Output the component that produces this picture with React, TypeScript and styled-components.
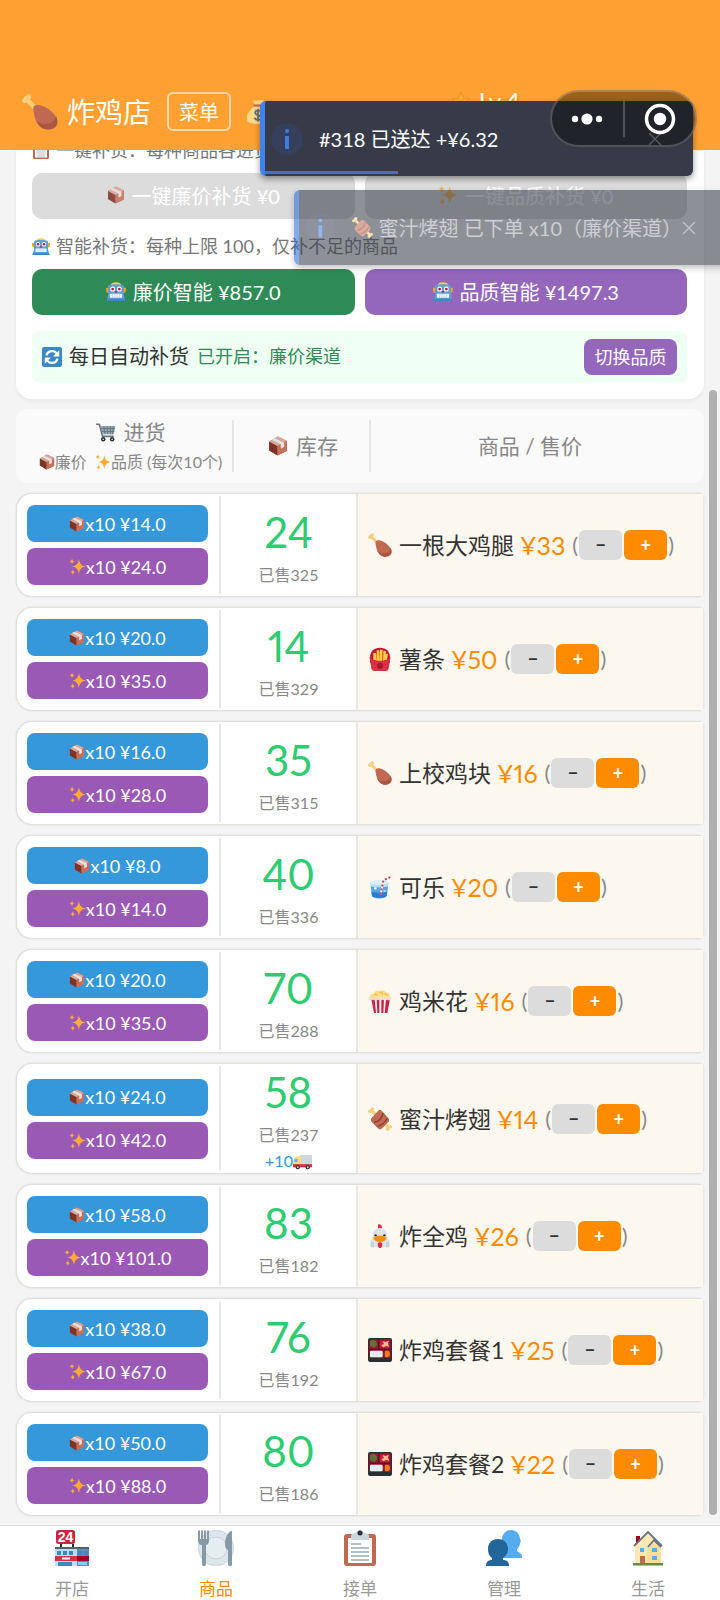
import React from "react";
import styled, { createGlobalStyle } from "styled-components";

const GlobalStyle = createGlobalStyle`
  *, *::before, *::after { box-sizing: border-box; }
  body {
    margin: 0;
    background: #f4f4f4;
    color: #333;
    font-family: Lato, "Noto Sans CJK SC", sans-serif;
    font-size: 18px;
  }
  button { font-family: inherit; border: 0; padding: 0; cursor: pointer; }
`;

/* ---------- Icons ---------- */

const icons: Record<string, React.ReactNode> = {
  drumstick: (
    <>
      <path d="M4 4.500 14 15" stroke="#f3cf7e" strokeWidth="4.500" strokeLinecap="round" />
      <circle cx="2.800" cy="6.500" r="2.600" fill="#f3cf7e" />
      <circle cx="6.500" cy="2.800" r="2.600" fill="#f3cf7e" />
      <path d="M12 12c3-2 7-1 11 1 6 3 12 9 12.500 14.500.5 5-3.500 8-9 8C19 35.500 14 29 12.500 22c-.7-4-2-8-.5-10z" fill="#bf6952" />
      <path d="M34 22c3 6 .5 13-8 13.500-6 0-10-4-12-9 6 5 17 6 20-4.500z" fill="#aa5742" />
    </>
  ),
  box: (
    <>
      <path d="M2 10 18 1l16 8v18L17 35 2 26z" fill="#b5654f" />
      <path d="M2 10 17 18v17L2 26z" fill="#7f3326" />
      <path d="M17 18 34 9v18l-17 8z" fill="#c5705a" />
      <path d="M2 10 18 1l16 8-17 9z" fill="#d6a79b" />
      <path d="m7 7 5-3 17 8v8l-6 3v-8z" fill="#e6e0de" />
    </>
  ),
  sparkles: (
    <g fill="#ffac33">
      <path d="M21 2c2 11 5 14 15 16-10 2-13 5-15 16-2-11-5-14-14-16 9-2 12-5 14-16z" />
      <path d="M6.500 1c1 4 2 5 5.500 6-3.500 1-4.500 2-5.500 6C5.500 9 4.500 8 1 7c3.500-1 4.500-2 5.500-6zM8 24c1 4 2 5 5 6-3 1-4 2-5 5.500C7 32 6 31 3 30c3-1 4-2 5-6z" />
    </g>
  ),
  robot: (
    <>
      <path d="M9 6C11 1 25 1 27 6l2 3H7z" fill="#ffcc4d" />
      <path d="M0 12h5v9H2c-2-1-2-7-2-9zM31 12h5c0 2 0 8-2 9h-3z" fill="#f4a41c" />
      <path d="M4 9c1-4 27-4 28 0v17l3 9H1l3-9z" fill="#5c9fdb" />
      <path d="M2 32h32l1 4H1z" fill="#3b88c3" />
      <rect x="8" y="10" width="8" height="9" rx="3" fill="#fff" />
      <rect x="20" y="10" width="8" height="9" rx="3" fill="#fff" />
      <circle cx="12" cy="14.500" r="2.500" fill="#be1931" /><circle cx="24" cy="14.500" r="2.500" fill="#be1931" />
      <rect x="16.500" y="18" width="3" height="3" fill="#be1931" />
      <rect x="7" y="23" width="22" height="7" rx="1" fill="#f5f8fa" />
      <path d="M12 23v7m4-7v7m4-7v7m4-7v7" stroke="#aab8c2" />
    </>
  ),
  refresh: (
    <>
      <rect width="36" height="36" rx="4" fill="#3b88c3" />
      <path d="M8 15c2-6 7-8.500 12-7.500 3 .6 5 2 7 4.500M28 21c-2 6-7 8.500-12 7.500-3-.6-5-2-7-4.500" fill="none" stroke="#fff" strokeWidth="4" />
      <path d="M31 6v11H20zM5 30V19h11z" fill="#fff" />
    </>
  ),
  cart: (
    <>
      <path d="M0 4h6l6 22h20" fill="none" stroke="#66757f" strokeWidth="3" strokeLinejoin="round" />
      <path d="M7 7h28l-3 15H12z" fill="#9aaab5" />
      <path d="M8 12h26M10 17h23M14 7l2 15M20 7l1 15M26 7v15M31 7l-1 15" stroke="#5d6e7a" strokeWidth="1.500" />
      <circle cx="13" cy="31" r="4" fill="#292f33" /><circle cx="29" cy="31" r="4" fill="#292f33" />
      <circle cx="13" cy="31" r="1.500" fill="#ccd6dd" /><circle cx="29" cy="31" r="1.500" fill="#ccd6dd" />
    </>
  ),
  fries: (
    <>
      <path d="M3 16C3 6 9 1 18 1s15 5 15 15v8H3z" fill="#bb1a34" />
      <path d="M8 9h4l1 15H8zM13 5h4v18h-4zM18 4h4l-1 18h-4zM23 6h4l-1 17h-4zM27 10h3l-2 12h-3z" fill="#ffcc4d" />
      <path d="m12 10 1 9m4-13v12m6-11-1 12" stroke="#f4900c" />
      <path d="M2 14c3 9 29 9 32 0l-3 18c-.4 3-2 4-5 4H10c-3 0-4.600-1-5-4z" fill="#dd2e44" />
      <circle cx="18" cy="28" r="4.500" fill="#a81730" />
    </>
  ),
  cup: (
    <>
      <path d="M3 11h28l-3 20c-1 6-21 6-22 0z" fill="#bbddf5" />
      <path d="M4 17c6 2 20 2 26 0l-2 14c-1 5-21 5-22 0z" fill="#55a5e6" />
      <path d="M5 25c7 2 16 2 24 0l-1 6c-2 4-20 4-22 0z" fill="#2b7bd0" />
      <ellipse cx="17" cy="11" rx="14" ry="3.500" fill="#dff0fb" />
      <path d="m19 29 4-21 11-5" fill="none" stroke="#f5f8fa" strokeWidth="3" />
      <path d="m19 29 4-21 11-5" fill="none" stroke="#c1435b" strokeWidth="3" strokeDasharray="3 3" />
      <circle cx="11" cy="20" r="2" fill="#e1f2ff" /><circle cx="25" cy="24" r="2" fill="#a5d4fa" />
    </>
  ),
  popcorn: (
    <>
      <path d="M3 13c-1-5 4-7 6-6 1-5 7-6 9-3 3-4 8-2 9 2 4-1 7 2 6 7z" fill="#ffdc7d" />
      <path d="M9 9c2-2 4-1 5 1m3-5c2-1 5 0 5 3m3 0c2-1 4 0 4 3" stroke="#f0a63c" strokeWidth="1.500" fill="none" />
      <path d="M3 15h30l-4 21H7z" fill="#f5f0f2" />
      <path d="m5 15 4 21h3l-2-21zM13 15l1 21h3V15zM20 15v21h3l1-21zM27 15l-2 21h4l4-21z" fill="#c32648" />
      <path d="M1 12q4-2 7 0 4-2 7 0 4-2 7 0 4-2 7 0 4-1 6 0v4q-3 2-6 0-4 2-7 0-4 2-7 0-4 2-7 0-4 1-7 0z" fill="#f1dfc3" />
    </>
  ),
  meat: (
    <>
      <path d="M5 5 31 31" stroke="#f3cf7e" strokeWidth="4.500" strokeLinecap="round" />
      <circle cx="2.800" cy="6.500" r="2.600" fill="#f3cf7e" /><circle cx="6.500" cy="2.800" r="2.600" fill="#f3cf7e" />
      <circle cx="33.200" cy="29.500" r="2.600" fill="#f3cf7e" /><circle cx="29.500" cy="33.200" r="2.600" fill="#f3cf7e" />
      <path d="M5 17 16 5c2-1 4 0 6 2l8 9c2 2 2 4 1 6L20 33c-2 1-4 0-6-2l-8-8c-2-2-2-4-1-6z" fill="#bf6952" />
      <path d="M9 23c7-1 12-7 14-14M15 29c6-2 11-6 14-12" stroke="#8c3a2b" strokeWidth="1.800" fill="none" />
    </>
  ),
  chicken: (
    <>
      <path d="M15 1c2-2 7 0 6 7h-6z" fill="#dd2e44" />
      <path d="M7 20C7 10 12 6 18 6s11 4 11 14l3 5v10H4V25z" fill="#dbe4ea" />
      <path d="M4 27h5v8H4zM27 27h5v8h-5z" fill="#c6d1d9" />
      <circle cx="11.500" cy="17" r="1.800" fill="#292f33" /><circle cx="24.500" cy="17" r="1.800" fill="#292f33" />
      <path d="M8 21c4-5 16-5 20 0-2 5-6 6-10 6S10 26 8 21z" fill="#f4900c" />
      <path d="M15 28c1-1 5-1 6 0 1 4 0 8-3 8s-4-4-3-8z" fill="#dd2e44" />
    </>
  ),
  bento: (
    <>
      <rect width="36" height="36" rx="3" fill="#292f33" />
      <rect x="2" y="2" width="32" height="28" rx="1" fill="#a0132d" />
      <path d="M3 5c5-4 10-1 11 5l-4 5-7-3z" fill="#5c7238" />
      <path d="M18 4h14v11H18z" fill="#c81e3d" />
      <path d="m20 11 4-2-2-4 5 1 4-2-1 5 2 4-5-1-4 2z" fill="#f6bd93" />
      <rect x="3" y="19" width="19" height="10" rx="2" fill="#e8eef2" />
      <circle cx="28" cy="24" r="5" fill="#ef781f" />
      <path d="M16 2v15M2 17h32M24 17v13" stroke="#55162a" strokeWidth="2" />
      <path d="M7 23h2m3 2h2m3-2h2" stroke="#bec9d0" />
    </>
  ),
  truck: (
    <>
      <path d="M13 6h23v19H13z" fill="#ccd6dd" />
      <path d="M3 12c1-3 3-4 5-4h7v16H0v-5z" fill="#ffdc7d" />
      <path d="M3 13h6v6H2z" fill="#70b5e8" />
      <path d="M0 23h36v6H0z" fill="#dd2e44" />
      <circle cx="9" cy="29" r="4" fill="#292f33" /><circle cx="28" cy="29" r="4" fill="#292f33" />
      <circle cx="9" cy="29" r="1.800" fill="#ccd6dd" /><circle cx="28" cy="29" r="1.800" fill="#ccd6dd" />
    </>
  ),
  store: (
    <>
      <path d="M7 14v5m12-5v5" stroke="#292f33" strokeWidth="2" />
      <path d="M1 17h34v19H1z" fill="#bbddf5" />
      <path d="M23 17h12v19H23z" fill="#5c8db9" />
      <path d="M1 17h22v2H1zM23 17h12v2H23z" fill="#555f6b" />
      <path d="M3 21h4v4H3zM9 21h4v4H9zM15 21h4v4h-4zM24 21h4v4h-4zM30 21h4v4h-4z" fill="#3b88c3" />
      <path d="M1 26h22v5H1z" fill="#dd2e44" /><path d="M23 26h12v5H23z" fill="#a0041e" />
      <path d="M8 27.500h8v2H8z" fill="#fff" />
      <path d="M4 32h14v4H4z" fill="#3b88c3" /><path d="M24 32h9v3h-9z" fill="#88c9f9" />
      <rect x="2" width="19" height="14" rx="2.500" fill="#cf2540" />
      <text x="11.500" y="12" textAnchor="middle" fontFamily="Liberation Sans" fontWeight="700" fontSize="14" fill="#fff">24</text>
    </>
  ),
  plate: (
    <>
      <circle cx="18" cy="18" r="18" fill="#ccd6dd" />
      <circle cx="18" cy="18" r="17" fill="#dde6eb" />
      <circle cx="18" cy="18" r="11" fill="#e4edf2" stroke="#c5d1d9" />
      <path d="M0 1c0-1 2-1 2 0v8h1V1c0-1 2-1 2 0v8h1V1c0-1 2-1 2 0v8h1V1c0-1 2-1 2 0v10c0 3-2 4-3 4v19c0 3-4 3-4 0V15c-3 0-4-2-4-4zM34 1v33c0 3-4 3-4 0V20c-6-2-2-19 4-19z" fill="#8899a6" />
    </>
  ),
  clipboard: (
    <>
      <rect x="2" y="4" width="32" height="32" rx="3" fill="#c1694f" />
      <path d="M6 8h24v25H6z" fill="#fff" />
      <path d="M9 14h10M9 18h18M9 22h18M9 26h18M9 30h18" stroke="#99aab5" strokeWidth="1.500" />
      <path d="M9 10V6c0-2 3-3 5-3 1-4 7-4 8 0 2 0 5 1 5 3v4z" fill="#ccd6dd" />
      <circle cx="18" cy="3" r="2.500" fill="#292f33" />
    </>
  ),
  people: (
    <>
      <path d="M25 0c5 0 9 4 9 9 1 2 1 3 0 4 0 2-1 4-3 6v2l3 2c2 1 2 3 2 5H16c0-3 1-5 5-6v-3c-3-2-5-5-5-9C16 4 20 0 25 0z" fill="#55acee" />
      <path d="M12 9c6 0 10 4 10 10 0 4-2 7-5 9v2c4 0 6 2 6 6H0c0-4 2-6 6-6v-2c-3-2-4-5-4-9C2 13 6 9 12 9z" fill="#226699" />
    </>
  ),
  house: (
    <>
      <path d="M6 6h4v9H6z" fill="#a0041e" />
      <path d="M5 15 18 3l13 13v17H5z" fill="#ffe8b6" />
      <path d="M17 16l6-6 8 7v16H17z" fill="#ffd983" opacity=".6" />
      <path d="M4 16 18 2l14 14M18 17l6-7 7 7" fill="none" stroke="#66757f" strokeWidth="1.800" />
      <path d="M10 18h4v4h-4zM22 18h5v4h-5zM22 26h5v4h-5z" fill="#55acee" />
      <path d="M10 26h5v7h-5z" fill="#c1694f" /><path d="M3 33h30v2.500H3z" fill="#5c913b" />
    </>
  ),
  money: (
    <>
      <path d="M11 2c5 2 10-2 15 0l-3 7h-9zM13 10h11c7 5 11 13 9 20-2 6-28 6-30 0-2-7 3-15 10-20z" fill="#fdd888" />
      <path d="M12 9h13" stroke="#bf6952" strokeWidth="3" />
      <path d="M23 18c-2-3-9-3-9 1s9 3 9 7-8 4-10 0M18 14v17" stroke="#67757f" strokeWidth="2.500" fill="none" />
    </>
  ),
  star: <path d="m18 2 4.500 11H34l-9 8 3.500 12L18 26 7.500 33 11 21l-9-8h11.500z" fill="#ffac33" stroke="#d98b1c" />,
};

const IconSvg = styled.svg<{ $size: number; $dim?: boolean }>`
  display: inline-block;
  flex: none;
  width: ${(p) => p.$size}px;
  height: ${(p) => p.$size}px;
  opacity: ${(p) => (p.$dim ? 0.85 : 1)};
`;

function Icon({ name, size, dim }: { name: string; size: number; dim?: boolean }) {
  return (
    <IconSvg $size={size} $dim={dim} viewBox="0 0 36 36" aria-hidden="true">
      {icons[name]}
    </IconSvg>
  );
}

/* ---------- Page shell ---------- */

const Shell = styled.div`
  position: relative;
  display: flex;
  flex-direction: column;
  height: 100vh;
  overflow: hidden;
`;

const Header = styled.header`
  position: relative;
  z-index: 1;
  flex: none;
  display: flex;
  align-items: center;
  height: 150px;
  padding: 73px 200px 0 22px;
  background: #ffa033;
  color: #fff;
`;

const ShopTitle = styled.h1`
  margin: 0 16px 0 9px;
  font-size: 28px;
  line-height: 40px;
  font-weight: 400;
`;

const MenuButton = styled.button`
  width: 64px;
  height: 39px;
  margin-right: 14px;
  border: 2px solid rgba(255, 255, 255, 0.6);
  border-radius: 6px;
  background: transparent;
  color: #fff;
  font-size: 20px;
  line-height: 32px;
`;

const Level = styled.span`
  display: flex;
  align-items: center;
  gap: 8px;
  align-self: flex-start;
  margin: 16px 0 0 auto;
  font-size: 24px;
  line-height: 24px;
`;

const Main = styled.main`
  flex: 1;
  min-height: 0;
  padding: 0 16px;
  overflow-y: auto;
  scrollbar-width: none;
`;

/* ---------- Restock panel ---------- */

const RestockCard = styled.section`
  margin: -43px 0 10px;
  padding: 16px 17px 16px 16px;
  border-radius: 16px;
  background: #fff;
  box-shadow: 0 2px 4px rgba(0, 0, 0, 0.05);
`;

const Note = styled.p`
  display: flex;
  align-items: center;
  gap: 6px;
  margin: 15px 0 11px;
  color: #777;
  font-size: 18px;
  line-height: 24px;
`;

const ButtonPair = styled.div`
  display: grid;
  grid-template-columns: 1fr 1fr;
  gap: 10px;
`;

const tones = { off: "#dcdcdc", green: "#2e8b57", purple: "#9467bd" };

const BulkButton = styled.button<{ $tone: keyof typeof tones }>`
  display: flex;
  align-items: center;
  justify-content: center;
  gap: 7px;
  height: 46px;
  padding-bottom: 2px;
  border-radius: 10px;
  background: ${(p) => tones[p.$tone]};
  color: #fff;
  font-size: 20px;
`;

const AutoRow = styled.div`
  display: flex;
  align-items: center;
  margin-top: 16px;
  padding: 8px 10px;
  border-radius: 8px;
  background: #effff4;
  line-height: 24px;
`;

const AutoTitle = styled.span`
  margin: 0 8px 2px 7px;
  font-size: 20px;
`;

const AutoStatus = styled.span`
  margin-bottom: 2px;
  color: #2e8b57;
  font-size: 18px;
`;

const SwitchButton = styled.button`
  width: 93px;
  height: 36px;
  margin-left: auto;
  border-radius: 8px;
  background: #9467bd;
  color: #fff;
  font-size: 18px;
  line-height: 34px;
`;

/* ---------- Product table ---------- */

const Table = styled.table`
  display: block;
`;

const TableHead = styled.thead`
  display: block;
`;

const TableBody = styled.tbody`
  display: flex;
  flex-direction: column;
  gap: 10px;
  padding: 10px 0;
`;

const HeadRow = styled.tr`
  display: grid;
  grid-template-columns: 208px 137px 1fr;
  padding: 11px 10px;
  border-radius: 12px;
  background: #fafafa;
`;

const HeadCell = styled.th<{ $last?: boolean }>`
  display: flex;
  flex-direction: column;
  align-items: center;
  justify-content: center;
  gap: 8px;
  padding: ${(p) => (p.$last ? "0 5px 0 0" : "0 0 0 3px")};
  border-right: ${(p) => (p.$last ? "0" : "2px solid #e5e5e5")};
  color: #888;
  font-weight: 400;
`;

const HeadLabel = styled.span`
  display: flex;
  align-items: center;
  gap: 8px;
  font-size: 21px;
  line-height: 24px;
`;

const HeadHint = styled.span`
  display: flex;
  align-items: center;
  font-size: 16px;
  line-height: 20px;
  white-space: pre;
`;

const ProductRow = styled.tr`
  display: grid;
  grid-template-columns: 204px 137px 1fr;
  min-height: 104px;
  border: 1px solid #e3dfda;
  border-right-color: #eeebe6;
  border-radius: 16px 6px 6px 16px;
  background: #fff;
  box-shadow: 0 0 2px rgba(0, 0, 0, 0.12);
`;

const BuyCell = styled.td`
  display: flex;
  flex-direction: column;
  justify-content: center;
  gap: 6px;
  margin: 2px 0;
  padding: 0 11px 0 10px;
  border-right: 2px solid #e8e8e8;
`;

const BuyButton = styled.button<{ $premium?: boolean }>`
  display: flex;
  align-items: center;
  justify-content: center;
  height: 37px;
  border-radius: 8px;
  background: ${(p) => (p.$premium ? "#9b59b6" : "#3498db")};
  color: #fff;
  font-size: 18px;
`;

const StockCell = styled.td`
  display: flex;
  flex-direction: column;
  align-items: center;
  justify-content: center;
  gap: 4px;
  padding: 0 0 1px;
  border-right: 2px solid #e8e8e8;
`;

const StockCount = styled.strong`
  color: #2ecc71;
  font-size: 42px;
  line-height: 56px;
  font-weight: 400;
  font-variant-numeric: proportional-nums;
`;

const SoldCount = styled.span`
  color: #888;
  font-size: 16px;
  line-height: 22px;
`;

const Incoming = styled.span`
  display: flex;
  align-items: center;
  color: #3498db;
  font-size: 16px;
  line-height: 22px;
`;

const ProductCell = styled.td`
  display: flex;
  align-items: center;
  padding: 0 10px;
  background: #fdf8ef;
  color: #888;
  font-size: 22px;
  line-height: 30px;
  white-space: nowrap;
`;

const ProductName = styled.span`
  margin: 0 6px 0 7px;
  color: #333;
  font-size: 23px;
`;

const Price = styled.span`
  margin-right: 7px;
  color: #ff8c00;
  font-size: 25px;
  font-variant-numeric: proportional-nums;
`;

const StepButton = styled.button<{ $plus?: boolean }>`
  width: 43px;
  height: 30px;
  margin-left: ${(p) => (p.$plus ? 2 : 1)}px;
  margin-right: ${(p) => (p.$plus ? 1 : 0)}px;
  border-radius: 6px;
  background: ${(p) => (p.$plus ? "#ff8c00" : "#dcdcdc")};
  color: ${(p) => (p.$plus ? "#fff" : "#333")};
  font-size: 18px;
  line-height: 30px;
  font-weight: 700;
`;

const ScrollThumb = styled.div`
  position: absolute;
  top: 390px;
  right: 3px;
  bottom: 85px;
  width: 8px;
  border-radius: 4px;
  background: #afafaf;
`;

/* ---------- Tab bar ---------- */

const TabBar = styled.nav`
  flex: none;
  display: grid;
  grid-template-columns: repeat(5, 1fr);
  padding: 4px 0 0;
  border-top: 1px solid #ddd;
  background: #fff;
`;

const Tab = styled.a<{ $active?: boolean }>`
  display: flex;
  flex-direction: column;
  align-items: center;
  gap: 12px;
  color: ${(p) => (p.$active ? "#ff8c00" : "#999")};
  font-size: 17px;
  line-height: 22px;
  text-decoration: none;
`;

/* ---------- Floating layers ---------- */

const ToastStack = styled.div`
  position: absolute;
  z-index: 2;
  top: 101px;
  right: 27px;
  width: 433px;
  display: flex;
  flex-direction: column;
  gap: 14px;
`;

const ToastBox = styled.div<{ $leaving?: boolean }>`
  position: relative;
  display: flex;
  align-items: center;
  height: 75px;
  margin-left: ${(p) => (p.$leaving ? 34 : 0)}px;
  margin-right: ${(p) => (p.$leaving ? -34 : 0)}px;
  padding: 0 31px 0 6px;
  border-left: 5px solid ${(p) => (p.$leaving ? "#2468dc" : "#3f82f0")};
  border-radius: 6px;
  background: #373b49;
  box-shadow: 0 3px 6px rgba(0, 0, 0, 0.4);
  color: ${(p) => (p.$leaving ? "#a6a8ae" : "#fff")};
  font-size: 20px;
  white-space: pre;
  opacity: ${(p) => (p.$leaving ? 0.56 : 1)};
`;

const ToastText = styled.span`
  display: flex;
  align-items: center;
  gap: 6px;
  margin-left: 16px;
`;

const ToastClose = styled.button`
  display: flex;
  margin-left: auto;
  background: transparent;
  color: #8e919a;
`;

const ToastProgress = styled.div`
  position: absolute;
  left: 0;
  bottom: 2px;
  width: 133px;
  height: 3px;
  background: #4470c4;
`;

const Capsule = styled.div`
  position: absolute;
  z-index: 3;
  top: 90px;
  right: 23px;
  display: flex;
  align-items: center;
  width: 147px;
  height: 57px;
  border: 2px solid rgba(255, 255, 255, 0.22);
  border-radius: 29px;
  background: rgba(0, 0, 0, 0.4);
`;

const CapsuleButton = styled.button`
  flex: 1;
  display: flex;
  justify-content: center;
  background: transparent;
`;

const CapsuleDivider = styled.span`
  width: 2px;
  height: 36px;
  background: rgba(255, 255, 255, 0.22);
`;

/* ---------- Data ---------- */

interface Product {
  icon: string;
  name: string;
  price: number;
  cheap: string;
  premium: string;
  stock: number;
  sold: number;
  incoming?: number;
}

const products: Product[] = [
  { icon: "drumstick", name: "一根大鸡腿", price: 33, cheap: "14.0", premium: "24.0", stock: 24, sold: 325 },
  { icon: "fries", name: "薯条", price: 50, cheap: "20.0", premium: "35.0", stock: 14, sold: 329 },
  { icon: "drumstick", name: "上校鸡块", price: 16, cheap: "16.0", premium: "28.0", stock: 35, sold: 315 },
  { icon: "cup", name: "可乐", price: 20, cheap: "8.0", premium: "14.0", stock: 40, sold: 336 },
  { icon: "popcorn", name: "鸡米花", price: 16, cheap: "20.0", premium: "35.0", stock: 70, sold: 288 },
  { icon: "meat", name: "蜜汁烤翅", price: 14, cheap: "24.0", premium: "42.0", stock: 58, sold: 237, incoming: 10 },
  { icon: "chicken", name: "炸全鸡", price: 26, cheap: "58.0", premium: "101.0", stock: 83, sold: 182 },
  { icon: "bento", name: "炸鸡套餐1", price: 25, cheap: "38.0", premium: "67.0", stock: 76, sold: 192 },
  { icon: "bento", name: "炸鸡套餐2", price: 22, cheap: "50.0", premium: "88.0", stock: 80, sold: 186 },
];

const tabs = [
  { icon: "store", label: "开店" },
  { icon: "plate", label: "商品", active: true },
  { icon: "clipboard", label: "接单" },
  { icon: "people", label: "管理" },
  { icon: "house", label: "生活" },
];

function Toast({ leaving, children }: { leaving?: boolean; children: React.ReactNode }) {
  return (
    <ToastBox $leaving={leaving} role="status">
      <svg width="32" height="32" viewBox="0 0 32 32" aria-hidden="true">
        <circle cx="16" cy="16" r="16" fill={leaving ? "#383f54" : "#36405c"} />
        <circle cx="16" cy="8" r="2" fill="#3f7ce0" />
        <path d="M16 13v13" stroke="#3f7ce0" strokeWidth="4" />
      </svg>
      <ToastText>{children}</ToastText>
      <ToastClose aria-label="关闭">
        <svg width="14" height="14" viewBox="0 0 14 14" stroke="currentColor" strokeWidth="1.500">
          <path d="m1 1 12 12M13 1 1 13" />
        </svg>
      </ToastClose>
      {!leaving && <ToastProgress />}
    </ToastBox>
  );
}

export default function App() {
  return (
    <Shell>
      <GlobalStyle />
      <Header>
        <Icon name="drumstick" size={36} />
        <ShopTitle>炸鸡店</ShopTitle>
        <MenuButton>菜单</MenuButton>
        <Icon name="money" size={26} />
        <Level>
          <Icon name="star" size={20} />
          Lv.4
        </Level>
      </Header>

      <Main>
        <RestockCard>
          <Note>
            <Icon name="clipboard" size={18} />
            一键补货：每种商品各进货一次
          </Note>
          <ButtonPair>
            <BulkButton $tone="off">
              <Icon name="box" size={18} dim />
              一键廉价补货 ¥0
            </BulkButton>
            <BulkButton $tone="off">
              <Icon name="sparkles" size={20} dim />
              一键品质补货 ¥0
            </BulkButton>
          </ButtonPair>
          <Note>
            <Icon name="robot" size={18} />
            智能补货：每种上限 100，仅补不足的商品
          </Note>
          <ButtonPair>
            <BulkButton $tone="green">
              <Icon name="robot" size={20} />
              廉价智能 ¥857.0
            </BulkButton>
            <BulkButton $tone="purple">
              <Icon name="robot" size={20} />
              品质智能 ¥1497.3
            </BulkButton>
          </ButtonPair>
          <AutoRow>
            <Icon name="refresh" size={20} />
            <AutoTitle>每日自动补货</AutoTitle>
            <AutoStatus>已开启：廉价渠道</AutoStatus>
            <SwitchButton>切换品质</SwitchButton>
          </AutoRow>
        </RestockCard>

        <Table>
          <TableHead>
            <HeadRow>
              <HeadCell scope="col">
                <HeadLabel>
                  <Icon name="cart" size={20} />
                  进货
                </HeadLabel>
                <HeadHint>
                  <Icon name="box" size={16} />
                  {"廉价  "}
                  <Icon name="sparkles" size={16} />
                  品质 (每次10个)
                </HeadHint>
              </HeadCell>
              <HeadCell scope="col">
                <HeadLabel>
                  <Icon name="box" size={20} />
                  库存
                </HeadLabel>
              </HeadCell>
              <HeadCell scope="col" $last>
                <HeadLabel>商品 / 售价</HeadLabel>
              </HeadCell>
            </HeadRow>
          </TableHead>
          <TableBody>
            {products.map((p) => (
              <ProductRow key={p.name}>
                <BuyCell>
                  <BuyButton>
                    <Icon name="box" size={16} />
                    x10 ¥{p.cheap}
                  </BuyButton>
                  <BuyButton $premium>
                    <Icon name="sparkles" size={17} />
                    x10 ¥{p.premium}
                  </BuyButton>
                </BuyCell>
                <StockCell>
                  <StockCount>{p.stock}</StockCount>
                  <SoldCount>已售{p.sold}</SoldCount>
                  {p.incoming && (
                    <Incoming>
                      +{p.incoming}
                      <Icon name="truck" size={19} />
                    </Incoming>
                  )}
                </StockCell>
                <ProductCell>
                  <Icon name={p.icon} size={24} />
                  <ProductName>{p.name}</ProductName>
                  <Price>¥{p.price}</Price>(
                  <StepButton aria-label={`${p.name}降价`}>−</StepButton>
                  <StepButton $plus aria-label={`${p.name}涨价`}>+</StepButton>)
                </ProductCell>
              </ProductRow>
            ))}
          </TableBody>
        </Table>
      </Main>
      <ScrollThumb />

      <TabBar>
        {tabs.map((t) => (
          <Tab key={t.label} href="#" $active={t.active}>
            <Icon name={t.icon} size={36} />
            {t.label}
          </Tab>
        ))}
      </TabBar>

      <ToastStack>
        <Toast>#318 已送达 +¥6.32</Toast>
        <Toast leaving>
          <Icon name="meat" size={21} />
          蜜汁烤翅 已下单 x10（廉价渠道）
        </Toast>
      </ToastStack>

      <Capsule>
        <CapsuleButton aria-label="更多">
          <svg width="32" height="12" viewBox="0 0 32 12" fill="#fff">
            <circle cx="4" cy="6" r="3.200" />
            <circle cx="16" cy="6" r="5.600" />
            <circle cx="28" cy="6" r="3.200" />
          </svg>
        </CapsuleButton>
        <CapsuleDivider />
        <CapsuleButton aria-label="退出">
          <svg width="32" height="32" viewBox="0 0 32 32">
            <circle cx="16" cy="16" r="13.500" fill="none" stroke="#fff" strokeWidth="3.500" />
            <circle cx="16" cy="16" r="6.200" fill="#fff" />
          </svg>
        </CapsuleButton>
      </Capsule>
    </Shell>
  );
}
